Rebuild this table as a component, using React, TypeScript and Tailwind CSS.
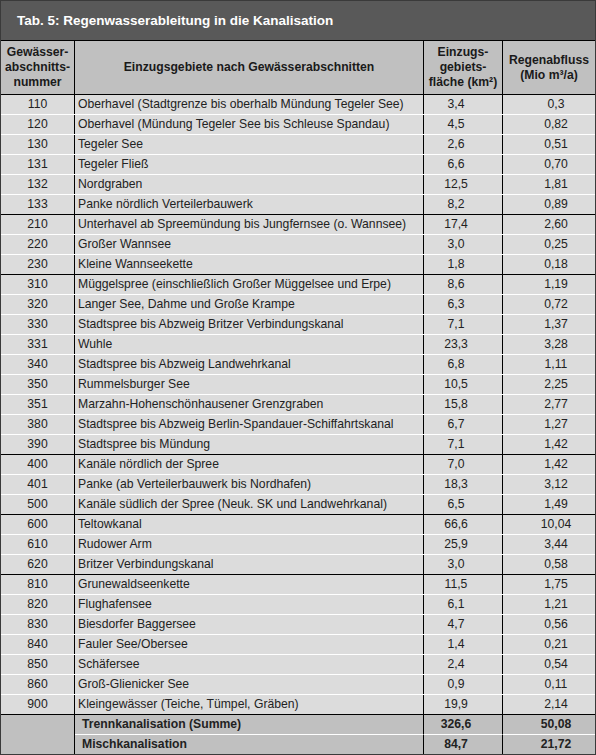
import React from "react";

type Row = [string, string, string, string, boolean?];

const rows: Row[] = [
  ["110", "Oberhavel (Stadtgrenze bis oberhalb Mündung Tegeler See)", "3,4", "0,3", true],
  ["120", "Oberhavel (Mündung Tegeler See bis Schleuse Spandau)", "4,5", "0,82"],
  ["130", "Tegeler See", "2,6", "0,51"],
  ["131", "Tegeler Fließ", "6,6", "0,70"],
  ["132", "Nordgraben", "12,5", "1,81"],
  ["133", "Panke nördlich Verteilerbauwerk", "8,2", "0,89"],
  ["210", "Unterhavel ab Spreemündung bis Jungfernsee (o. Wannsee)", "17,4", "2,60", true],
  ["220", "Großer Wannsee", "3,0", "0,25"],
  ["230", "Kleine Wannseekette", "1,8", "0,18"],
  ["310", "Müggelspree (einschließlich Großer Müggelsee und Erpe)", "8,6", "1,19", true],
  ["320", "Langer See, Dahme und Große Krampe", "6,3", "0,72"],
  ["330", "Stadtspree bis Abzweig Britzer Verbindungskanal", "7,1", "1,37"],
  ["331", "Wuhle", "23,3", "3,28"],
  ["340", "Stadtspree bis Abzweig Landwehrkanal", "6,8", "1,11"],
  ["350", "Rummelsburger See", "10,5", "2,25"],
  ["351", "Marzahn-Hohenschönhausener Grenzgraben", "15,8", "2,77"],
  ["380", "Stadtspree bis Abzweig Berlin-Spandauer-Schiffahrtskanal", "6,7", "1,27"],
  ["390", "Stadtspree bis Mündung", "7,1", "1,42"],
  ["400", "Kanäle nördlich der Spree", "7,0", "1,42", true],
  ["401", "Panke (ab Verteilerbauwerk bis Nordhafen)", "18,3", "3,12"],
  ["500", "Kanäle südlich der Spree (Neuk. SK und Landwehrkanal)", "6,5", "1,49"],
  ["600", "Teltowkanal", "66,6", "10,04", true],
  ["610", "Rudower Arm", "25,9", "3,44"],
  ["620", "Britzer Verbindungskanal", "3,0", "0,58"],
  ["810", "Grunewaldseenkette", "11,5", "1,75", true],
  ["820", "Flughafensee", "6,1", "1,21"],
  ["830", "Biesdorfer Baggersee", "4,7", "0,56"],
  ["840", "Fauler See/Obersee", "1,4", "0,21"],
  ["850", "Schäfersee", "2,4", "0,54"],
  ["860", "Groß-Glienicker See", "0,9", "0,11"],
  ["900", "Kleingewässer (Teiche, Tümpel, Gräben)", "19,9", "2,14"],
];

export default function App() {
  return (
    <div
      className="w-[596px] h-[755px] border border-[#3a3a3a] bg-[#dcdcdc] text-[#222222] text-[12.2px] leading-[15px] overflow-hidden"
      style={{ fontFamily: '"Liberation Sans", Arial, sans-serif' }}
    >
      <div className="h-[39px] bg-[#595959] flex items-center pl-[16px] text-white text-[13.5px] font-bold">
        Tab. 5: Regenwasserableitung in die Kanalisation
      </div>
      <div className="grid grid-cols-[74px_349px_79px_1fr] h-[54px] border-t border-black bg-[#c0c0c0] font-bold text-[#1a1a1a]">
        <div className="border-r border-black flex items-center justify-center text-center">
          Gewässer-<br />abschnitts-<br />nummer
        </div>
        <div className="border-r border-black flex items-center justify-center">
          Einzugsgebiete nach Gewässerabschnitten
        </div>
        <div className="border-r border-black flex items-center justify-center text-center">
          Einzugs-<br />gebiets-<br />fläche (km²)
        </div>
        <div className="flex items-center justify-center text-center">
          Regenabfluss<br />(Mio m³/a)
        </div>
      </div>
      {rows.map(([nr, name, area, flow, groupStart]) => (
        <div
          key={nr}
          className={`grid grid-cols-[74px_349px_79px_1fr] h-[20px] border-t ${
            groupStart ? "border-black" : "border-white"
          }`}
        >
          <div className="border-r border-black flex items-center justify-center">{nr}</div>
          <div className="border-r border-black flex items-center pl-[3px] whitespace-nowrap">{name}</div>
          <div className="border-r border-black flex items-center justify-center pr-[14px]">{area}</div>
          <div className="flex items-center justify-center pl-[14px]">{flow}</div>
        </div>
      ))}
      <div className="grid grid-cols-[74px_349px_79px_1fr] border-t border-black bg-[#c0c0c0] font-bold">
        <div className="row-span-2 border-r border-black" />
        <div className="h-[19px] border-r border-black flex items-center pl-[7px]">Trennkanalisation (Summe)</div>
        <div className="h-[19px] border-r border-black flex items-center justify-center pr-[14px]">326,6</div>
        <div className="h-[19px] flex items-center justify-center pl-[14px]">50,08</div>
        <div className="h-[20px] border-t border-white border-r border-r-black flex items-center pl-[7px]">Mischkanalisation</div>
        <div className="h-[20px] border-t border-white border-r border-r-black flex items-center justify-center pr-[14px]">84,7</div>
        <div className="h-[20px] border-t border-white flex items-center justify-center pl-[14px]">21,72</div>
      </div>
    </div>
  );
}
